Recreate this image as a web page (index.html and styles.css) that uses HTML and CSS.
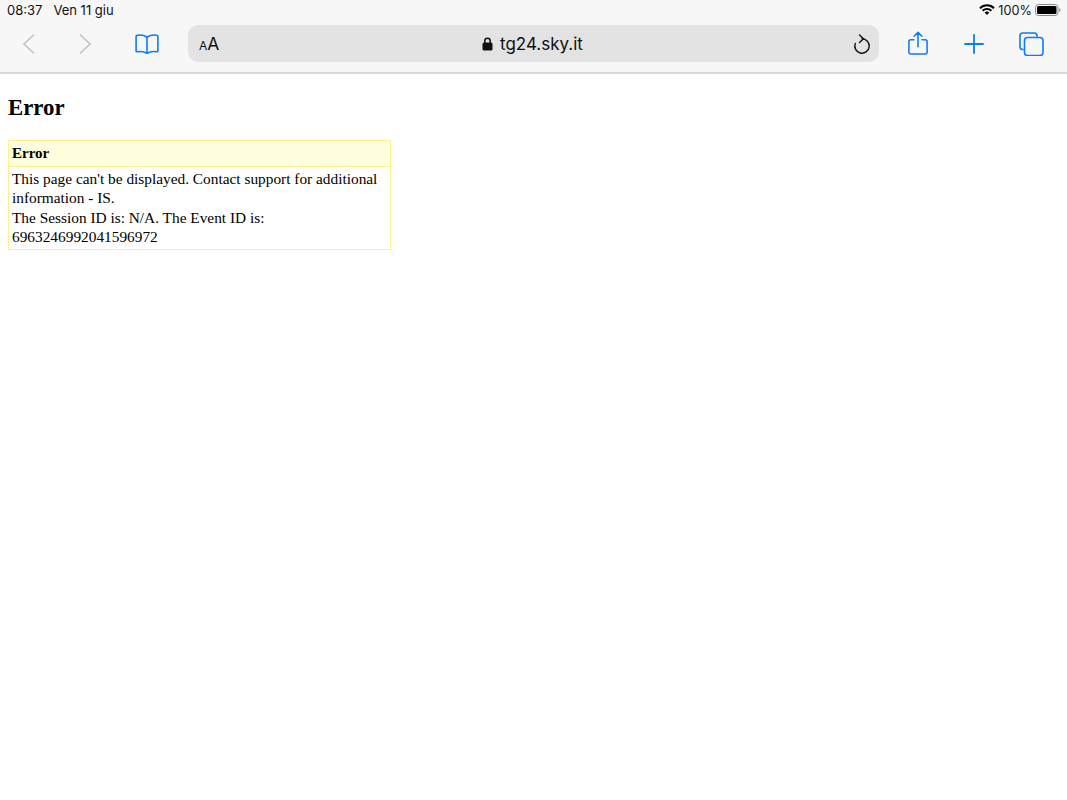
FILE: index.html
```html
<!DOCTYPE html>
<html lang="it">
<head>
<meta charset="utf-8">
<title>tg24.sky.it</title>
<link rel="stylesheet" href="styles.css">
</head>
<body>
<header class="chrome">
  <div class="status">
    <div class="status-left"><span>08:37</span><span>Ven 11 giu</span></div>
    <div class="status-right">
      <svg class="wifi" width="16" height="12" viewBox="0 0 16 12"><path d="M1 4.200a10 10 0 0 1 14 0" fill="none" stroke="#000" stroke-width="2"/><path d="M3.600 6.800a6.400 6.400 0 0 1 8.800 0" fill="none" stroke="#000" stroke-width="2"/><path d="M5.700 8.600a3.300 3.300 0 0 1 4.600 0L8 11z" fill="#000"/></svg>
      <span>100%</span>
      <svg class="battery" width="26" height="12" viewBox="0 0 26 12"><rect x=".5" y=".5" width="22.500" height="11" rx="3" fill="none" stroke="#8a8a8a"/><rect x="2" y="2" width="19.500" height="8" rx="1.600" fill="#000"/><path d="M24.200 4.200c1 .3 1.400 1 1.400 1.800s-.4 1.500-1.400 1.800z" fill="#8a8a8a"/></svg>
    </div>
  </div>
  <div class="toolbar">
    <svg class="icon back" width="14" height="22" viewBox="0 0 14 22"><path d="M12 1.500 2 11l10 9.500" fill="none" stroke="#c4c4c6" stroke-width="1.700"/></svg>
    <svg class="icon forward" width="14" height="22" viewBox="0 0 14 22"><path d="M2 1.500 12 11 2 20.500" fill="none" stroke="#c4c4c6" stroke-width="1.700"/></svg>
    <svg class="icon book" width="24" height="20" viewBox="0 0 24 20"><path d="M12 3.500C10.500 1.800 8 1 5 1c-1.300 0-2.500.1-3.300.5-.4.200-.6.500-.6 1V17c0 .6.400.9 1 .8 3.500-.6 7.300-.3 9.900 1.500 2.600-1.800 6.400-2.100 9.900-1.500.6.100 1-.2 1-.8V2.500c0-.5-.2-.8-.6-1C22 1.100 20.300 1 19 1c-3 0-5.500.8-7 2.500zm0 0v15.500" fill="none" stroke="#0a7aff" stroke-width="1.600" stroke-linejoin="round"/></svg>
    <div class="address">
      <span class="aa"><small>A</small>A</span>
      <span class="host">
        <svg width="11" height="14" viewBox="0 0 11 14"><path d="M2.800 6V4a2.700 2.700 0 0 1 5.400 0v2" fill="none" stroke="#111" stroke-width="1.500"/><rect x=".5" y="5.500" width="10" height="8" rx="1.500" fill="#111"/></svg>
        <span>tg24.sky.it</span>
      </span>
      <svg class="reload" width="18" height="22" viewBox="0 0 18 22"><path d="M9 5.800a7.200 7.200 0 1 1-6.700 4.600" fill="none" stroke="#111" stroke-width="1.400" stroke-linecap="round"/><path d="M6.500 2l4 3.800-4 3.800" fill="none" stroke="#111" stroke-width="1.400" stroke-linecap="round" stroke-linejoin="round"/></svg>
    </div>
    <svg class="icon share" width="20" height="24" viewBox="0 0 22 26"><path d="M6.500 9.500H3.200A2.200 2.200 0 0 0 1 11.700v11.100A2.200 2.200 0 0 0 3.200 25h15.600a2.200 2.200 0 0 0 2.200-2.200V11.700a2.200 2.200 0 0 0-2.200-2.200h-3.300M11 17V1.500M6.800 5.500 11 1.300l4.200 4.200" fill="none" stroke="#0a7aff" stroke-width="1.700" stroke-linecap="round" stroke-linejoin="round"/></svg>
    <svg class="icon plus" width="20" height="20" viewBox="0 0 20 20"><path d="M10 1v18M1 10h18" fill="none" stroke="#0a7aff" stroke-width="1.800" stroke-linecap="round"/></svg>
    <svg class="icon tabs" width="25" height="24" viewBox="0 0 25 24"><path d="M4.500 17.500h-.700A2.800 2.800 0 0 1 1 14.700V3.800A2.800 2.800 0 0 1 3.800 1h11.400A2.800 2.800 0 0 1 18 3.800v1" fill="none" stroke="#0a7aff" stroke-width="1.600"/><rect x="5.500" y="5.500" width="18.500" height="18" rx="3" fill="none" stroke="#0a7aff" stroke-width="1.600"/></svg>
  </div>
</header>
<main class="page">
  <h1 class="title">Error</h1>
  <section class="notice">
    <div class="notice-head">Error</div>
    <div class="notice-body">This page can't be displayed. Contact support for additional information - IS.<br>The Session ID is: N/A. The Event ID is: 6963246992041596972</div>
  </section>
</main>
</body>
</html>
```
FILE: styles.css
```css
* { box-sizing: border-box; }
html, body { margin: 0; padding: 0; background: #fff; }
body { width: 1067px; height: 800px; overflow: hidden; }

.chrome {
  height: 74px;
  background: #f7f7f7;
  border-bottom: 2px solid #d9d9d9;
  font-family: "Inter", "Liberation Sans", sans-serif;
  color: #111;
}
.status {
  height: 22px;
  display: flex;
  justify-content: space-between;
  align-items: center;
  padding: 0 6px 2px 7px;
}
.status-left { display: flex; gap: 11px; font-size: 13px; }
.status-right { display: flex; align-items: center; gap: 3px; font-size: 12.700px; }
.toolbar {
  height: 43px;
  display: flex;
  align-items: center;
  padding: 0 0 0 22px;
}
.icon { flex: none; display: block; }
.forward { margin-left: 42px; }
.book { margin-left: 43px; }
.address {
  flex: none;
  width: 691px;
  height: 37px;
  margin-left: 29px;
  background: #e3e3e3;
  border-radius: 10px;
  display: flex;
  align-items: center;
  justify-content: space-between;
  padding: 0 8px 0 11px;
  position: relative;
}
.aa { font-size: 17.500px; line-height: 1; }
.aa small { font-size: 12px; }
.host {
  position: absolute;
  left: 294px;
  top: 0;
  height: 37px;
  display: flex;
  align-items: center;
  gap: 7px;
  font-size: 17px;
}
.share { margin-left: 29px; margin-top: -1px; }
.plus { margin-left: 36px; }
.tabs { margin-left: 35px; }

.page { padding: 20px 8px 0; }
.title {
  margin: 0 0 19px;
  font-family: "Liberation Serif", "Times New Roman", serif;
  font-size: 22.800px;
  line-height: 27px;
  font-weight: bold;
  color: #000;
}
.notice {
  width: 383px;
  height: 110px;
  border: 1px solid #fff08c;
  font-family: "Liberation Serif", "Times New Roman", serif;
  font-size: 15.350px;
  color: #000;
}
.notice-head {
  height: 26px;
  padding: 2px 3px;
  line-height: 20px;
  font-weight: bold;
  font-size: 15px;
  background: #ffffdd;
  border-bottom: 1px solid #fff08c;
}
.notice-body { padding: 2px 3px; line-height: 19.300px; }
```
